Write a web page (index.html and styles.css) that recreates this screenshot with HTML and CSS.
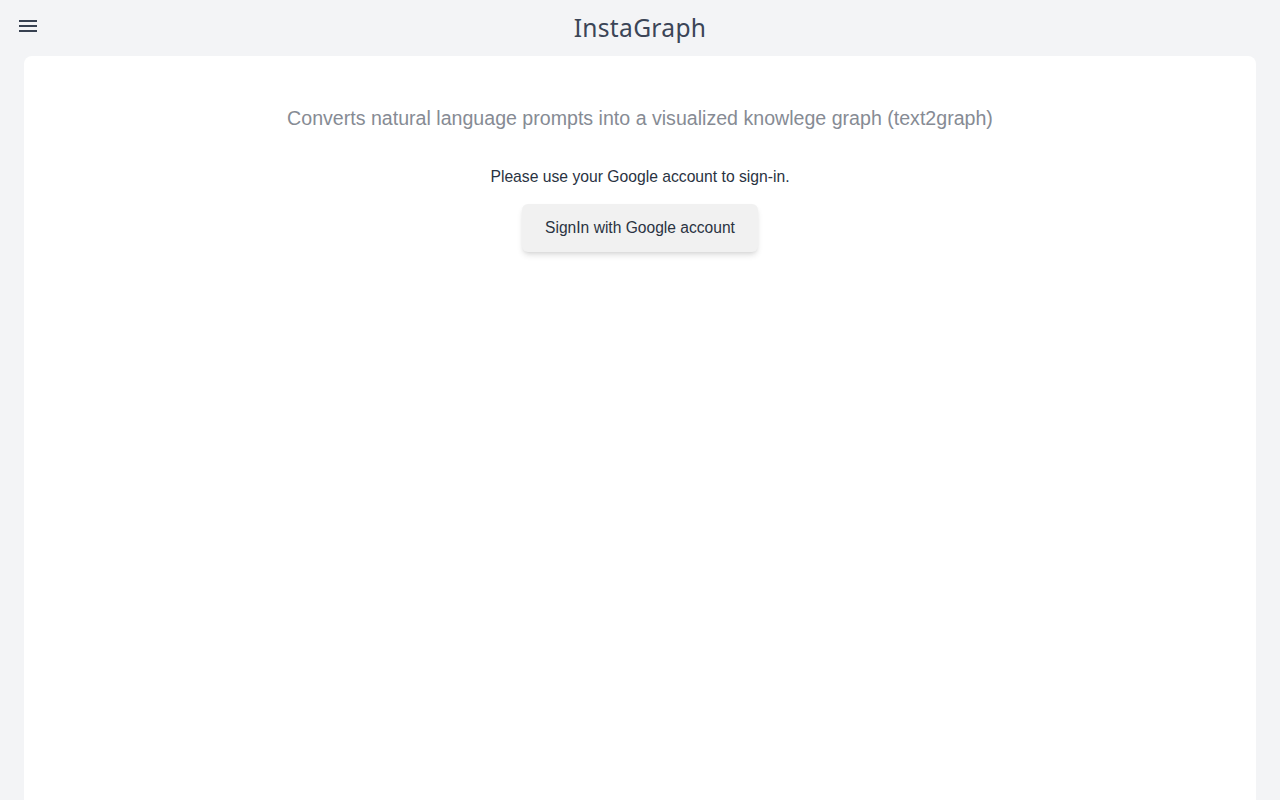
FILE: index.html
```html
<!DOCTYPE html>
<html lang="en">
<head>
<meta charset="utf-8">
<title>InstaGraph</title>
<link rel="stylesheet" href="styles.css">
</head>
<body>
<header class="topbar">
  <button class="menu-btn" aria-label="menu">
    <svg width="24" height="24" viewBox="0 0 24 24"><path d="M3 18h18v-2H3v2zm0-5h18v-2H3v2zm0-7v2h18V6H3z" fill="#374151"/></svg>
  </button>
  <h1 class="brand">InstaGraph</h1>
</header>
<main class="card">
  <p class="tagline">Converts natural language prompts into a visualized knowlege graph (text2graph)</p>
  <p class="notice">Please use your Google account to sign-in.</p>
  <button class="signin">SignIn with Google account</button>
</main>
</body>
</html>
```
FILE: styles.css
```css
html, body { margin: 0; padding: 0; }
body {
  background: #f3f4f6;
  font-family: "Liberation Sans", Arial, sans-serif;
  color: #1f2937;
  min-height: 800px;
}
.topbar {
  position: relative;
  height: 56px;
  display: flex;
  align-items: center;
  justify-content: center;
}
.menu-btn {
  position: absolute;
  left: 16px;
  top: 14px;
  padding: 0;
  margin: 0;
  border: 0;
  background: none;
  width: 24px;
  height: 24px;
  display: block;
}
.menu-btn svg { display: block; }
.brand {
  margin: 0;
  font-family: "Noto Sans", sans-serif;
  font-weight: 400;
  font-size: 24.6px;
  color: #3b4557;
  letter-spacing: 0.3px;
  line-height: 1;
}
.card {
  margin: 0 24px;
  background: #fff;
  border-radius: 8px 8px 0 0;
  min-height: 744px;
  display: flex;
  flex-direction: column;
  align-items: center;
  padding-top: 48px;
  box-sizing: border-box;
}
.tagline {
  margin: 0;
  font-size: 19.6px;
  line-height: 28px;
  color: #868b94;
}
.notice {
  margin: 33px 0 0;
  font-size: 15.7px;
  line-height: 24px;
  color: #2a3342;
}
.signin {
  margin-top: 15px;
  height: 48px;
  width: 236px;
  padding: 0;
  border: 0;
  border-radius: 6px;
  background: #f1f1f1;
  font-family: inherit;
  font-size: 15.6px;
  color: #2a3342;
  box-shadow: 0 4px 6px -1px rgba(0,0,0,0.12), 0 2px 4px -2px rgba(0,0,0,0.1);
}
```
